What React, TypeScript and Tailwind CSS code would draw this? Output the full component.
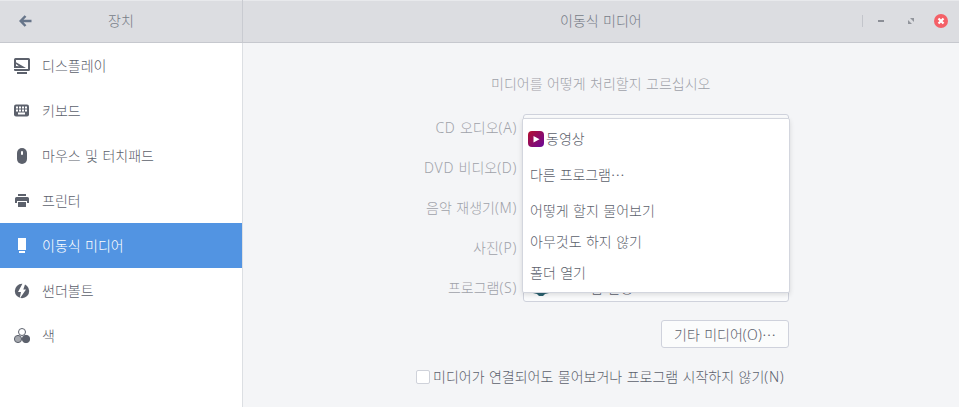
import type { ReactNode } from "react";

function DisplayIcon() {
  return (
    <svg width="16" height="16" viewBox="0 0 16 16" fill="currentColor">
      <path fillRule="evenodd" d="M1.500 0h13A1.500 1.500 0 0 1 16 1.500v10a1.500 1.500 0 0 1-1.500 1.500h-13A1.500 1.500 0 0 1 0 11h14V2H2v2.200L12 10H0V1.500A1.500 1.500 0 0 1 1.500 0zM2 6v2l3 .2z" />
      <path d="M3 14h10v2H3z" />
    </svg>
  );
}

function KeyboardIcon() {
  return (
    <svg width="16" height="16" viewBox="0 0 16 16">
      <rect x="0" y="1.500" width="15" height="12" rx="2" fill="currentColor" />
      <g fill="#fff">
        {[2, 5, 8, 11].map((x) => (
          <rect key={x} x={x} y="3.500" width="2" height="2" />
        ))}
        {[2, 5, 8, 11].map((x) => (
          <rect key={x} x={x} y="6.500" width="2" height="2" />
        ))}
        <rect x="4" y="9.500" width="7" height="2" />
      </g>
    </svg>
  );
}

function MouseIcon() {
  return (
    <svg width="16" height="16" viewBox="0 0 16 16">
      <rect x="3" y="0" width="10" height="16" rx="5" fill="currentColor" />
      <rect x="7" y="3" width="2" height="4" rx="1" fill="#fff" />
    </svg>
  );
}

function PrinterIcon() {
  return (
    <svg width="16" height="16" viewBox="0 0 16 16" fill="currentColor">
      <path d="M4 1h8v2H4z" />
      <path d="M2.500 4h11A1.500 1.500 0 0 1 15 5.500V10h-2V8H3v2H1V5.500A1.500 1.500 0 0 1 2.500 4z" />
      <path d="M4 9h8v4.500a.5.500 0 0 1-.5.500h-7a.5.500 0 0 1-.5-.5z" />
    </svg>
  );
}

function DriveIcon() {
  return (
    <svg width="16" height="16" viewBox="0 0 16 16" fill="currentColor">
      <path d="M4 0h8v12H4zM5 13h6v2H5z" />
    </svg>
  );
}

function BoltIcon() {
  return (
    <svg width="16" height="16" viewBox="0 0 16 16">
      <circle cx="8" cy="8" r="7.200" fill="currentColor" />
      <path d="M8.800 0 4 9h3l-1.500 7L12 6.500H9.300l2-6z" fill="#fff" />
    </svg>
  );
}

function ColorIcon() {
  return (
    <svg width="16" height="16" viewBox="0 0 16 16" stroke="#5c616c">
      <circle cx="8" cy="4" r="3.500" fill="#fff" />
      <circle cx="12" cy="11" r="3.700" fill="#5c616c" />
      <circle cx="4" cy="11" r="3.600" fill="#a5a8ae" />
    </svg>
  );
}

const items: { label: string; icon: ReactNode; active?: boolean }[] = [
  { label: "디스플레이", icon: <DisplayIcon /> },
  { label: "키보드", icon: <KeyboardIcon /> },
  { label: "마우스 및 터치패드", icon: <MouseIcon /> },
  { label: "프린터", icon: <PrinterIcon /> },
  { label: "이동식 미디어", icon: <DriveIcon />, active: true },
  { label: "썬더볼트", icon: <BoltIcon /> },
  { label: "색", icon: <ColorIcon /> },
];

const media: { prefix?: string; name: string; hotkey: string; app?: string }[] = [
  { prefix: "CD", name: " 오디오", hotkey: "(A)" },
  { prefix: "DVD", name: " 비디오", hotkey: "(D)" },
  { name: "음악 재생기", hotkey: "(M)" },
  { name: "사진", hotkey: "(P)" },
  { name: "프로그램", hotkey: "(S)", app: "프로그램 실행" },
];

function Latin({ children }: { children: ReactNode }) {
  return <span className="tracking-[0.7px]">{children}</span>;
}

function Ellipsis() {
  return <span className="font-['Noto_Sans_CJK_KR',sans-serif] tracking-[-1px]">…</span>;
}

function Header() {
  return (
    <header className="flex h-[43px] shrink-0 border-b border-[#c6c8ce] bg-[#dcdde1] text-[#777c87] shadow-[inset_0_1px_0_#e8e9ec]">
      <div className="flex w-[243px] items-center border-r border-[#c9cbd1]">
        <svg className="ml-[19px]" width="13" height="12" viewBox="0 0 13 12" fill="none" stroke="#67758a" strokeWidth="2.500">
          <path d="M6.500 1 1.700 6l4.800 5M2 6h10.500" />
        </svg>
        <span className="ml-[76px]">장치</span>
      </div>
      <div className="flex flex-1 items-center">
        <span className="ml-[317px]">이동식 미디어</span>
        <span className="ml-auto h-3 w-px bg-[#c3c5cb]" />
        <svg className="ml-[15px]" width="6" height="2">
          <rect width="6" height="2" fill="#8b8e96" />
        </svg>
        <svg className="ml-[24px]" width="6" height="6" fill="#92959c">
          <path d="M2 0h4v4zM0 2l4 4H0z" />
        </svg>
        <svg className="mr-[11px] ml-5" width="14" height="14" viewBox="0 0 14 14">
          <circle cx="7" cy="7" r="7" fill="#f46067" />
          <path d="m4.500 4.500 5 5m0-5-5 5" stroke="#fff" strokeWidth="2.200" />
        </svg>
      </div>
    </header>
  );
}

function MediaMenu() {
  return (
    <div className="absolute top-[4px] right-[-1px] h-[175px] w-[268px] rounded-[2px] border border-[#d3d6de] bg-white pt-[3px] text-[#5c616c] shadow-[0_2px_5px_rgba(0,0,0,0.12)]">
      <div className="flex h-[33px] items-center pl-[5px]">
        <svg width="16" height="16" viewBox="0 0 16 16">
          <defs>
            <linearGradient id="video" x1="0" y1="0" x2="1" y2="1">
              <stop offset="0" stopColor="#b50f2c" />
              <stop offset="1" stopColor="#69089b" />
            </linearGradient>
          </defs>
          <rect width="16" height="16" rx="4" fill="url(#video)" />
          <path d="m5.500 5 6 3.300-6 3.200z" fill="#fff" />
        </svg>
        <span className="ml-[2px]">동영상</span>
      </div>
      <div className="flex h-[38px] items-center pl-[7px]">
        <span className="tracking-[-0.15px]">
          다른 프로그램
          <Ellipsis />
        </span>
      </div>
      <div className="flex h-[36px] items-center pl-[7px]">어떻게 할지 물어보기</div>
      <div className="flex h-[26px] items-center pl-[7px]">아무것도 하지 않기</div>
      <div className="flex h-[36px] items-center pl-[7px]">폴더 열기</div>
    </div>
  );
}

export default function App() {
  return (
    <div className="flex h-[407px] w-[959px] flex-col overflow-hidden bg-[#f4f5f7] font-['Noto_Sans','Noto_Sans_CJK_KR',sans-serif] text-[14px] leading-5 font-light whitespace-nowrap [word-spacing:0.8px]">
      <Header />
      <div className="flex min-h-0 flex-1">
        <nav className="w-[243px] border-r border-[#dcdfe3] bg-white text-[#5c616c]">
          {items.map((item) => (
            <div
              key={item.label}
              className={`flex h-[45px] items-center pl-[14px] ${item.active ? "bg-[#5294e2] text-white" : ""}`}
            >
              {item.icon}
              <span className="ml-3">{item.label}</span>
            </div>
          ))}
        </nav>
        <main className="flex-1 text-[#9fa2a9]">
          <p className="pt-[31px] pl-[248px]">미디어를 어떻게 처리할지 고르십시오</p>
          <div className="relative mt-5 flex w-[546px] flex-col gap-3">
            {media.map(({ prefix, name, hotkey, app }) => (
              <div key={name} className="flex h-7 items-center justify-end gap-[6px]">
                <span>
                  {prefix && <Latin>{prefix}</Latin>}
                  {name}
                  <Latin>{hotkey}</Latin>
                </span>
                <div className="flex h-7 w-[266px] items-center rounded-[3px] border border-[#cfd2dc] bg-[#fafbfc] pl-2 text-[#5c616c]">
                  {app && (
                    <>
                      <svg width="18" height="16" viewBox="0 0 18 16">
                        <path d="M9 0l8 4v9l-4 1-2 2H7l-2-2-4-1V4z" fill="#2b6270" />
                      </svg>
                      <span className="ml-px">{app}</span>
                    </>
                  )}
                </div>
              </div>
            ))}
            <MediaMenu />
          </div>
          <div className="mt-[18px] flex w-[546px] justify-end">
            <button className="h-7 w-[128px] rounded-[3px] border border-[#cfd2dc] bg-[#fbfcfc] pr-px text-[#5c616c] [word-spacing:0.8px]">
              기타 미디어<span className="tracking-[0.2px]">(O)</span>
              <Ellipsis />
            </button>
          </div>
          <label className="mt-[19px] flex items-center pl-[173px] text-[#5c616c]">
            <span className="h-[14px] w-[14px] rounded-[2px] border border-[#cfd2da] bg-white" />
            <span className="ml-[3px]">
              미디어가 연결되어도 물어보거나 프로그램 시작하지 않기<Latin>(N)</Latin>
            </span>
          </label>
        </main>
      </div>
    </div>
  );
}
